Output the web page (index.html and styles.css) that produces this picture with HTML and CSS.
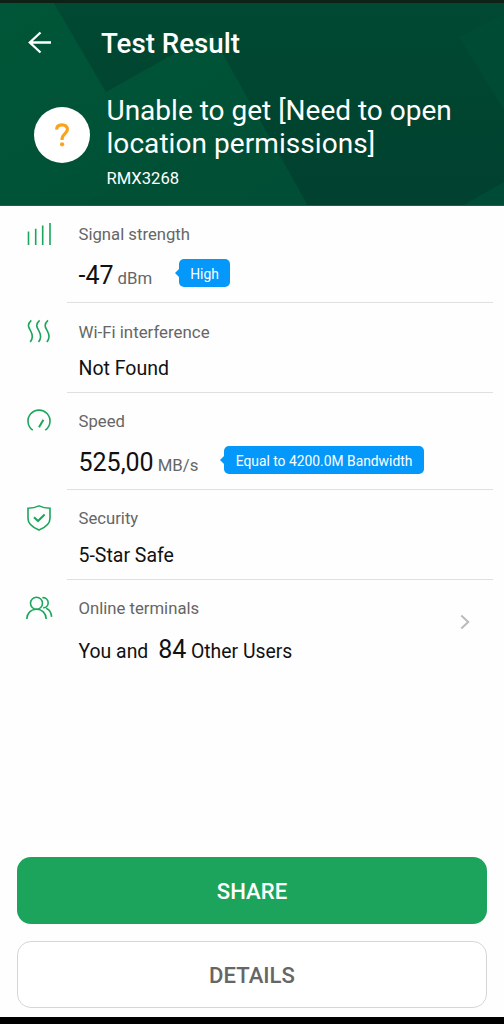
FILE: index.html
```html
<!DOCTYPE html>
<html lang="en">
<head>
<meta charset="utf-8">
<title>Test Result</title>
<link rel="stylesheet" href="styles.css">
</head>
<body>
<div class="screen">
  <header class="hero">
    <svg class="hero-art" viewBox="0 0 504 206" preserveAspectRatio="none" aria-hidden="true">
      <defs>
        <linearGradient id="right" x1="0" y1="0" x2="0" y2="1"><stop offset="0" stop-color="#004932"/><stop offset="1" stop-color="#00412f"/></linearGradient>
        <linearGradient id="left" x1="0" y1="0" x2="1" y2="1"><stop offset="0" stop-color="#005638"/><stop offset="1" stop-color="#004f36"/></linearGradient>
      </defs>
      <rect width="504" height="206" fill="url(#right)"/>
      <path d="M0 0H52L106 92L211 33L308 206H0Z" fill="url(#left)"/>
      <path d="M80 206L252 115L308 206Z" fill="#004a34" opacity=".25"/>
      <path d="M459 37L504 14V110Z" fill="#004c36" opacity=".8"/>
      <path d="M462 206L504 182V206Z" fill="#004b36"/>
      <rect width="504" height="3" fill="#0d2117"/>
      <rect y="205" width="504" height="1" fill="#16634a"/>
    </svg>
    <div class="bar">
      <svg class="back" viewBox="0 0 24 24"><path d="M12.5 1.5L1.8 11.5L12.5 21.5M2 11.5H23"/></svg>
      <h1 class="title">Test Result</h1>
    </div>
    <div class="device">
      <div class="status">
        <svg viewBox="0 0 14 24"><path d="M1.6 6.6C1.7 3.5 3.8 1.8 7 1.8S12.4 3.6 12.4 6.6C12.4 10.4 7.1 11 7.1 15.8V17"/><circle cx="7.1" cy="21.3" r="2.1"/></svg>
      </div>
      <div class="device-text">
        <p class="network">Unable to get [Need to open<br><span class="network-end">location permissions]</span></p>
        <p class="model">RMX3268</p>
      </div>
    </div>
  </header>

  <main class="list">
    <section class="row tall">
      <svg class="icon" viewBox="0 0 28 28"><path d="M2.5 10.5V24M9.7 7.7V24M16.7 4.6V24M24 2V24"/></svg>
      <div class="body">
        <h2 class="label">Signal strength</h2>
        <div class="value"><p class="reading signal"><span class="num">-47</span><span class="unit">dBm</span></p><span class="badge high">High</span></div>
      </div>
    </section>
    <section class="row">
      <svg class="icon" viewBox="0 0 28 28"><path d="M5.3 2.4C.5 6.8 2.8 9.6 4.5 12.6S7.8 19.6 4.2 24.1M13.6 2.4C8.8 6.8 11.1 9.6 12.8 12.6S16.1 19.6 12.5 24.1M22 2.4C17.2 6.8 19.5 9.6 21.2 12.6S24.5 19.6 20.9 24.1"/></svg>
      <div class="body">
        <h2 class="label wifi">Wi-Fi interference</h2>
        <p class="plain">Not Found</p>
      </div>
    </section>
    <section class="row tall">
      <svg class="icon" viewBox="0 0 28 28"><path d="M6.8 22.2A11 11 0 1 1 19.2 22.2"/><path class="thick" d="M13 19.2L17.4 11.7"/></svg>
      <div class="body">
        <h2 class="label">Speed</h2>
        <div class="value"><p class="reading rate"><span class="num">525,00</span><span class="unit">MB/s</span></p><span class="badge band">Equal to 4200.0M Bandwidth</span></div>
      </div>
    </section>
    <section class="row">
      <svg class="icon" viewBox="0 0 28 28"><path d="M13 .9C9.8 2.4 5.8 3.2 2 3.3V13.5C2 19.4 7.3 22.7 13 25.1C18.7 22.7 24 19.4 24 13.5V3.3C20.2 3.2 16.2 2.4 13 .9Z"/><path class="thick" d="M8 12.2L12 16L18.6 9.5"/></svg>
      <div class="body">
        <h2 class="label">Security</h2>
        <p class="plain">5-Star Safe</p>
      </div>
    </section>
    <section class="row last">
      <svg class="icon" viewBox="0 0 28 28"><circle cx="10.5" cy="8.2" r="6"/><path d="M.8 24C1 18 5 14.2 10.5 14.2S20 18 20.2 24M16.4 2.7C20 2.3 22.2 4.8 22.2 7.7C22.2 10.8 20 12.7 17.2 12.7M20.2 13.2C23.6 14.8 25.4 17.8 25.6 21.9"/></svg>
      <div class="body">
        <h2 class="label">Online terminals</h2>
        <p class="terminals">You and<span class="count">84</span>Other Users</p>
      </div>
      <svg class="chevron" viewBox="0 0 10 16"><path d="M1.3 1.5L8.2 8L1.3 14.5"/></svg>
    </section>
  </main>

  <footer class="actions">
    <button class="btn share">SHARE</button>
    <button class="btn details">DETAILS</button>
  </footer>
  <div class="navbar"></div>
</div>
</body>
</html>
```
FILE: styles.css
```css
* { box-sizing: border-box; margin: 0; padding: 0; }
body { font-family: Roboto, "Liberation Sans", sans-serif; background: #fefefe; color: #111; }
.screen { width: 504px; height: 1024px; display: flex; flex-direction: column; overflow: hidden; }
svg { fill: none; flex: none; }

.hero { position: relative; height: 206px; color: #fff; flex: none; }
.hero-art { position: absolute; inset: 0; width: 100%; height: 100%; }
.bar { position: relative; display: flex; align-items: center; height: 84px; padding: 2px 0 0 28px; }
.back { width: 24px; height: 24px; stroke: #fff; stroke-width: 2.3; }
.title { margin-left: 49px; font-size: 27.7px; font-weight: 500; line-height: 34px; margin-top: 1px; }
.device { position: relative; display: flex; padding-left: 33.5px; }
.status { width: 56px; height: 56px; margin-top: 22.5px; border-radius: 50%; background: #fff; display: flex; align-items: center; justify-content: center; }
.status svg { width: 14px; height: 24px; stroke: #fba31a; stroke-width: 3.2; }
.status circle { fill: #fba31a; stroke: none; }
.device-text { margin-left: 17px; padding-top: 10px; }
.network { font-size: 28px; line-height: 33px; white-space: nowrap; }
.network-end { letter-spacing: 0.06px; }
.model { font-size: 16.6px; line-height: 20px; margin-top: 9px; }

.list { flex: 1; }
.row { display: flex; position: relative; height: 90px; padding-left: 26px; }
.row.tall { height: 97px; }
.icon { width: 28px; height: 28px; margin-top: 15px; stroke: #1ca65c; stroke-width: 1.6; }
.thick { stroke-width: 2; }
.body { flex: none; width: 426px; margin-left: 13px; padding: 19px 0 0 11.5px; border-bottom: 1px solid #e0e0e0; }
.last .body { border: 0; width: 393px; }
.label { font-size: 16.7px; font-weight: 400; line-height: 20px; color: #666; }
.label.wifi { font-size: 16.85px; }
.value { display: flex; margin-top: 14px; align-items: flex-start; line-height: 34px; white-space: nowrap; }
.signal { width: 100.5px; }
.rate { width: 145.5px; }
.num { font-size: 25px; }
.unit { font-size: 16.8px; color: #666; margin-left: 4px; }
.plain { font-size: 19.5px; line-height: 24px; margin-top: 15px; }
.badge { position: relative; height: 28px; border-radius: 5px; background: #0498fa; color: #fff; font-size: 13.85px; line-height: 30px; text-align: center; white-space: nowrap; }
.badge::before { content: ""; position: absolute; left: -4px; top: 9px; border: 5px solid transparent; border-left: 0; border-right: 5px solid #0498fa; }
.high { width: 51px; }
.band { width: 200px; }
.terminals { font-size: 19.4px; line-height: 34px; margin-top: 14px; }
.count { font-size: 25px; margin: 0 4.5px 0 10px; }
.chevron { width: 10px; height: 16px; margin-top: 34px; stroke: #bbb; stroke-width: 2; }

.actions { display: flex; flex-direction: column; gap: 17px; padding: 0 17px 9px; }
.btn { height: 67px; border: 0; border-radius: 14px; font: 500 22.1px/67px Roboto, "Liberation Sans", sans-serif; }
.share { background: #1ca45c; color: #fff; padding-top: 1px; }
.details { background: #fff; color: #666; border: 1.4px solid #d6d6d6; }
.navbar { height: 7px; background: #000; flex: none; }
```
